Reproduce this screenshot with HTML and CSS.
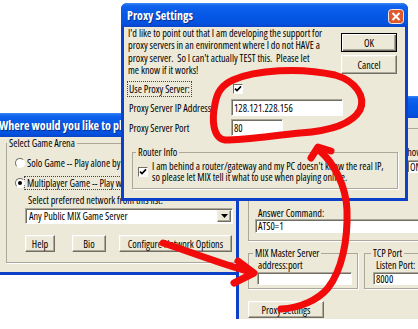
FILE: index.html
```html
<!DOCTYPE html>
<html>
<head>
<meta charset="utf-8">
<title>Proxy Settings</title>
<link rel="stylesheet" href="styles.css">
</head>
<body>
<div class="desk">

  <div class="win win-left">
    <div class="title"><span class="title-text">Where would you like to play?</span></div>
    <div class="body">
      <fieldset class="group arena">
        <legend>Select Game Arena</legend>
        <div class="radio-row"><span class="radio"></span><span>Solo Game -- Play alone by yourself</span></div>
        <div class="radio-row"><span class="radio on"></span><span class="focus">Multiplayer Game -- Play with others on a network</span></div>
        <div class="hint">Select preferred network from this list:</div>
        <div class="combo"><span class="combo-text">Any Public MIX Game Server</span><span class="drop"><svg width="7" height="4" viewBox="0 0 7 4"><path d="M0 0H7L3.5 4Z" fill="#000"/></svg></span></div>
        <div class="btn-row">
          <button class="btn b-help">Help</button>
          <button class="btn b-bio">Bio</button>
          <button class="btn b-conf">Configure Network Options</button>
        </div>
      </fieldset>
    </div>
  </div>

  <div class="win win-right">
    <div class="title"></div>
    <div class="body">
      <div class="upper">
        <div class="show">Show</div>
        <div class="edit on-edit">ON</div>
        <div class="ans-lbl">Answer Command:</div>
        <div class="edit ans-edit">ATS0=1</div>
      </div>
      <div class="lower">
        <fieldset class="group mix">
          <legend>MIX Master Server</legend>
          <div class="sub-lbl">address:port</div>
          <div class="edit mix-edit"></div>
        </fieldset>
        <fieldset class="group tcp">
          <legend>TCP Port</legend>
          <div class="sub-lbl">Listen Port:</div>
          <div class="edit tcp-edit">8000</div>
        </fieldset>
      </div>
      <button class="btn b-proxy">Proxy Settings</button>
    </div>
  </div>

  <div class="win win-proxy">
    <div class="title">
      <span class="title-text">Proxy Settings</span>
      <svg class="close" width="16" height="15" viewBox="0 0 16 15"><rect x="0.5" y="0.5" width="15" height="14" rx="3" fill="#E0572C" stroke="#F4E8E2"/><path d="M4.5 4 L11.5 11 M11.5 4 L4.5 11" stroke="#fff" stroke-width="2"/></svg>
    </div>
    <div class="body proxy-body">
      <div class="proxy-top">
        <p class="intro">I'd like to point out that I am developing the support for<br>proxy servers in an environment where I do not HAVE a<br>proxy server.&nbsp; So I can't actually TEST this.&nbsp; Please let<br>me know if it works!</p>
        <div class="dlg-btns">
          <button class="btn btn-default">OK</button>
          <button class="btn">Cancel</button>
        </div>
      </div>
      <div class="field-row check-row">
        <span class="lbl"><span class="focus">Use Proxy Server:</span></span>
        <span class="check"><svg width="8" height="8" viewBox="0 0 8 8"><path d="M1 3.6 L3 5.6 L7 1.4" stroke="#000" stroke-width="1.7" fill="none"/></svg></span>
      </div>
      <div class="field-row"><span class="lbl">Proxy Server IP Address</span><span class="edit ip">128.121.228.156</span></div>
      <div class="field-row"><span class="lbl">Proxy Server Port</span><span class="edit port">80</span></div>
      <fieldset class="group router">
        <legend>Router Info</legend>
        <div class="router-row">
          <span class="check"><svg width="8" height="8" viewBox="0 0 8 8"><path d="M1 3.6 L3 5.6 L7 1.4" stroke="#000" stroke-width="1.7" fill="none"/></svg></span>
          <span class="router-text">I am behind a router/gateway and my PC doesn't know the real IP,<br>so please let MIX tell it what to use when playing online.</span>
        </div>
      </fieldset>
    </div>
  </div>

  <svg class="ink" width="418" height="329" viewBox="0 0 418 329">
    <g fill="none" stroke="#F20B0B" stroke-width="7" stroke-linecap="round" stroke-linejoin="round">
      <path d="M233 80 C255 70, 300 67, 335 75 C356 81, 366 97, 360 110 C352 124, 330 131, 300 133 C270 136, 245 140, 225 140 C212 138, 212 118, 215 104 C217 92, 222 85, 233 80"/>
      <path d="M281 309 C300 308, 318 300, 328 288 C342 270, 348 240, 347 210 C346 185, 333 162, 320 151"/>
      <path d="M311 158 L318 147 L331 151"/>
      <path d="M163 243 C185 250, 215 262, 250 272"/>
      <path d="M238 261 L254 273 L234 283"/>
    </g>
  </svg>

</div>
</body>
</html>
```
FILE: styles.css
```css
* { box-sizing: border-box; }

html, body {
  margin: 0;
  width: 418px;
  height: 329px;
  overflow: hidden;
  background: #fff;
}

body {
  font-family: "Open Sans", "Liberation Sans", Arial, sans-serif;
  font-stretch: 75%;
  font-size: 10.2px;
  color: #000;
}

.desk {
  position: relative;
  width: 418px;
  height: 329px;
}

/* ---------- windows ---------- */
.win {
  position: absolute;
  display: flex;
  flex-direction: column;
  background: #0C40C8;
  border-radius: 6px 6px 0 0;
}
.win-left  { left: -6px;  top: 113px; width: 251px; height: 162px; z-index: 1; }
.win-right { left: 236px; top: 96px;  width: 220px; height: 223px; z-index: 2; }
.win-proxy { left: 121px; top: 3px;   width: 287px; height: 198px; z-index: 3; }

.title {
  flex: none;
  height: 24px;
  display: flex;
  align-items: center;
  border-radius: 6px 6px 0 0;
  background: linear-gradient(#3B87F7 0%, #0F62EC 12%, #0558E6 50%, #0452DF 85%, #0A45C8 100%);
  color: #fff;
  font-weight: bold;
  font-size: 12px;
  white-space: nowrap;
  overflow: hidden;
}
.win-right .title { height: 22px; }
.title-text { padding-left: 5px; text-shadow: 1px 1px 0 #0A2E8C; }
.win-proxy .title-text { padding-left: 6px; }
.close { margin-left: auto; margin-right: 4px; margin-top: 2px; }

.body {
  flex: 1;
  margin: 0 3px 3px;
  background: #ECE9D8;
}
.win-right .body { margin-bottom: 0; }

/* ---------- common controls ---------- */
.group {
  margin: 0;
  padding: 0;
  min-inline-size: 0;
  border: 1px solid #ACA899;
  box-shadow: 1px 1px 0 #fff;
}
.group legend {
  padding: 0 2px;
  line-height: 12px;
  background: #ECE9D8;
}

.btn {
  font: inherit;
  color: #000;
  background: #ECE9D8;
  border: 1px solid;
  border-color: #fff #716F64 #716F64 #fff;
  box-shadow: inset -1px -1px 0 #ACA899, inset 1px 1px 0 #F1EFE2;
  padding: 0;
  display: flex;
  align-items: center;
  justify-content: center;
  white-space: nowrap;
}
.btn-default {
  border-color: #000;
  box-shadow: inset 1px 1px 0 #fff, inset -1px -1px 0 #716F64, inset -2px -2px 0 #ACA899;
}

.edit {
  background: #fff;
  border: 1px solid;
  border-color: #ACA899 #fff #fff #ACA899;
  box-shadow: inset 1px 1px 0 #716F64;
  padding: 0 2px;
  display: flex;
  align-items: center;
  white-space: nowrap;
  overflow: hidden;
}

.check {
  flex: none;
  width: 10px;
  height: 10px;
  background: #fff;
  border: 1px solid;
  border-color: #716F64 #fff #fff #716F64;
  display: flex;
  align-items: center;
  justify-content: center;
}

.radio {
  flex: none;
  position: relative;
  width: 10px;
  height: 10px;
  border-radius: 50%;
  background: #fff;
  border: 1px solid;
  border-color: #716F64 #fff #fff #716F64;
}
.radio.on::after {
  content: "";
  position: absolute;
  left: 2px;
  top: 2px;
  width: 4px;
  height: 4px;
  border-radius: 50%;
  background: #000;
}

.focus {
  outline: 1px dotted #444;
  padding: 0 2px;
}

/* ---------- left window ---------- */
.arena {
  margin-left: 9px;
  width: 240px;
  padding-bottom: 10px;
}
.radio-row {
  display: flex;
  align-items: center;
  gap: 2px;
  height: 12px;
  margin: 8px 0 0 8px;
  white-space: nowrap;
}
.radio-row .focus { margin-left: -2px; line-height: 12px; }
.hint { margin: 5px 0 0 21px; line-height: 12px; white-space: nowrap; }
.combo {
  margin: 2px 0 0 18px;
  width: 208px;
  height: 16px;
  background: #fff;
  border: 1px solid;
  border-color: #ACA899 #fff #fff #ACA899;
  box-shadow: inset 1px 1px 0 #716F64;
  display: flex;
  align-items: center;
  padding: 0 1px 0 3px;
}
.combo-text { flex: 1; white-space: nowrap; }
.drop {
  width: 14px;
  height: 12px;
  background: #ECE9D8;
  border: 1px solid;
  border-color: #F1EFE2 #716F64 #716F64 #F1EFE2;
  box-shadow: inset -1px -1px 0 #ACA899;
  display: flex;
  align-items: center;
  justify-content: center;
}
.btn-row { display: flex; height: 17px; margin: 11px 0 0 18px; }
.b-help { width: 30px; }
.b-bio  { width: 34px; margin-left: 17px; }
.b-conf { width: 113px; margin-left: 13px; }

/* ---------- right window ---------- */
.upper {
  margin: 10px 0 0 9px;
  width: 240px;
  border: 1px solid #ACA899;
  box-shadow: 1px 1px 0 #fff;
  padding: 17px 0 7px 8px;
}
.show { margin-left: 146px; line-height: 12px; }
.on-edit { margin: 2px 0 0 150px; width: 60px; height: 13px; }
.ans-lbl { margin: 34px 0 0 1px; line-height: 12px; white-space: nowrap; }
.ans-edit { margin-left: -2px; width: 200px; height: 14px; }

.lower { display: flex; gap: 6px; margin: 6px 0 0 9px; }
.mix { width: 111px; padding: 0 0 3px 4px; }
.tcp { width: 90px; padding: 0 0 3px 4px; }
.tcp legend { margin-left: 2px; }
.sub-lbl { line-height: 10px; margin: 1px 0 0 5px; white-space: nowrap; }
.tcp .sub-lbl { margin-left: 7px; }
.mix-edit { margin: 2px 0 0 4px; width: 95px; height: 13px; }
.tcp-edit { margin: 2px 0 0 4px; width: 70px; height: 13px; }
.b-proxy { margin: 12px 0 0 9px; width: 76px; height: 17px; }

/* ---------- proxy dialog ---------- */
.proxy-body {
  display: flex;
  flex-direction: column;
  padding: 0 8px 0 4px;
}
.proxy-top {
  height: 55px;
  display: flex;
  justify-content: space-between;
}
.intro {
  margin: 0;
  line-height: 12.4px;
  white-space: nowrap;
}
.dlg-btns {
  margin-top: 6px;
  display: flex;
  flex-direction: column;
  gap: 3px;
}
.dlg-btns .btn { width: 56px; height: 19px; }

.field-row {
  display: flex;
  align-items: center;
  height: 17px;
  margin-top: 3px;
}
.check-row { height: 14px; margin-top: 0; }
.lbl {
  flex: none;
  width: 103px;
  padding-left: 1px;
  white-space: nowrap;
}
.check-row .lbl .focus { margin-left: -1px; padding: 0 1px; }
.check-row .check { margin-left: 2px; }
.ip   { width: 112px; height: 17px; }
.port { width: 52px;  height: 17px; }

.router {
  margin: 10px 0 0 4px;
  width: 266px;
  padding: 3px 6px 6px 3px;
}
.router-row { display: flex; align-items: center; gap: 4px; }
.router-row .check { margin-left: 2px; }
.router-text { line-height: 10.6px; white-space: nowrap; }

/* ---------- annotation ---------- */
.ink {
  position: absolute;
  left: 0;
  top: 0;
  z-index: 10;
  pointer-events: none;
}
```
